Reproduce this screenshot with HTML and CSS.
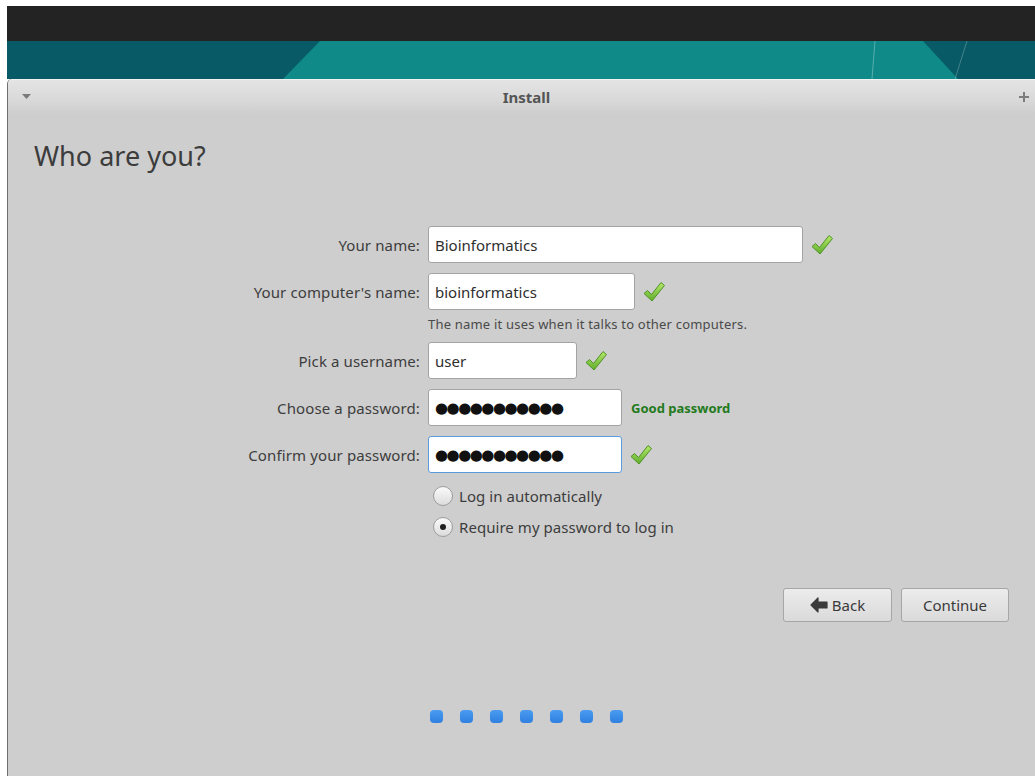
FILE: index.html
```html
<!DOCTYPE html>
<html lang="en">
<head>
<meta charset="utf-8">
<title>Install</title>
<link rel="stylesheet" href="styles.css">
</head>
<body>
<div class="screen">
  <div class="panel"></div>
  <div class="desktop">
    <svg class="wallpaper" width="1028" height="38" viewBox="0 0 1028 38" aria-hidden="true">
      <rect x="0" y="0" width="1028" height="38" fill="#0f8a89"/>
      <polygon points="0,0 313,0 276,38 0,38" fill="#075a66"/>
      <polygon points="916,0 1028,0 1028,38 951,38" fill="#075a66"/>
      <line x1="868" y1="0" x2="865" y2="38" stroke="#ffffff" stroke-opacity="0.3" stroke-width="1"/>
      <line x1="960" y1="0" x2="948" y2="38" stroke="#ffffff" stroke-opacity="0.25" stroke-width="1"/>
    </svg>

    <div class="window">
      <div class="titlebar">
        <span class="tb-menu"><svg width="9" height="6" viewBox="0 0 9 6"><polygon points="0,0 9,0 4.5,5" fill="#7a7a7a"/></svg></span>
        <span class="tb-title">Install</span>
        <span class="tb-max"><svg width="10" height="10" viewBox="0 0 10 10"><path d="M5 0v10M0 5h10" stroke="#7d7d7d" stroke-width="2"/></svg></span>
      </div>

      <div class="content">
        <h1 class="page-title">Who are you?</h1>

        <div class="form">
          <label class="label">Your name:</label>
          <div class="field">
            <div class="entry w-name">Bioinformatics</div>
            <svg class="ok" width="24" height="22" viewBox="0 0 24 22"><use href="#check"/></svg>
          </div>

          <label class="label">Your computer's name:</label>
          <div class="field">
            <div class="entry w-host">bioinformatics</div>
            <svg class="ok" width="24" height="22" viewBox="0 0 24 22"><use href="#check"/></svg>
          </div>

          <span></span>
          <div class="hint">The name it uses when it talks to other computers.</div>

          <label class="label">Pick a username:</label>
          <div class="field">
            <div class="entry w-user">user</div>
            <svg class="ok" width="24" height="22" viewBox="0 0 24 22"><use href="#check"/></svg>
          </div>

          <label class="label">Choose a password:</label>
          <div class="field">
            <div class="entry w-pass"><span class="dots">●●●●●●●●●●●</span></div>
            <span class="strength">Good password</span>
          </div>

          <label class="label">Confirm your password:</label>
          <div class="field">
            <div class="entry w-pass focused"><span class="dots">●●●●●●●●●●●</span></div>
            <svg class="ok" width="24" height="22" viewBox="0 0 24 22"><use href="#check"/></svg>
          </div>

          <span></span>
          <div class="radios">
            <div class="radio-row"><span class="radio"></span>Log in automatically</div>
            <div class="radio-row"><span class="radio checked"></span>Require my password to log in</div>
          </div>
        </div>

        <div class="actions">
          <button class="btn btn-back">
            <svg width="18" height="16" viewBox="0 0 18 16"><path d="M1 8 L8 1 L8 5 L17 5 L17 11 L8 11 L8 15 Z" fill="#3b3b3b" stroke="#3b3b3b" stroke-width="1.2" stroke-linejoin="round"/></svg>
            Back
          </button>
          <button class="btn">Continue</button>
        </div>

        <div class="progress">
          <span class="step"></span><span class="step"></span><span class="step"></span><span class="step"></span><span class="step"></span><span class="step"></span><span class="step"></span>
        </div>
      </div>
    </div>
  </div>
</div>

<svg width="0" height="0" class="defs" aria-hidden="true">
  <defs>
    <linearGradient id="checkFill" x1="0" y1="0" x2="0" y2="1">
      <stop offset="0" stop-color="#b5e86a"/>
      <stop offset="1" stop-color="#5fae2c"/>
    </linearGradient>
    <symbol id="check" viewBox="0 0 24 22">
      <path d="M2 12.5 L5.5 9.5 L9.5 13.5 L19 1.5 L22.5 4.5 L10 20 Z" fill="url(#checkFill)" stroke="#4f9226" stroke-width="1" stroke-linejoin="round"/>
    </symbol>
  </defs>
</svg>
</body>
</html>
```

FILE: styles.css
```css
html, body {
  margin: 0;
  padding: 0;
  background: #ffffff;
  overflow: hidden;
  height: 100%;
}

body {
  font-family: "Noto Sans", "Open Sans", sans-serif;
  color: #3a3a3a;
}

.defs {
  position: absolute;
}

.screen {
  margin: 6px 0 0 7px;
  height: 770px;
  display: flex;
  flex-direction: column;
}

.panel {
  height: 35px;
  background: #232323;
  flex: none;
}

.desktop {
  position: relative;
  flex: 1;
  display: flex;
  flex-direction: column;
}

.wallpaper {
  position: absolute;
  left: 0;
  top: 0;
}

.window {
  position: relative;
  margin-top: 38px;
  width: 1037px;
  flex: 1;
  background: #cecece;
  border-left: 1px solid #6f6f6f;
  border-top-left-radius: 5px;
  display: flex;
  flex-direction: column;
}

.titlebar {
  height: 34px;
  flex: none;
  display: grid;
  grid-template-columns: 1fr auto 1fr;
  align-items: center;
  background: linear-gradient(#e4e4e4, #d9d9d9 60%, #cfcfcf);
  border-top: 1px solid #f2f2f2;
  border-top-left-radius: 5px;
  box-sizing: border-box;
}

.tb-menu {
  padding-left: 14px;
  display: flex;
}

.tb-title {
  font-weight: bold;
  font-size: 15px;
  color: #555555;
}

.tb-max {
  justify-self: end;
  padding-right: 16px;
  display: flex;
}

.content {
  display: flex;
  flex-direction: column;
  flex: 1;
}

.page-title {
  margin: 27px 0 0 26px;
  font-size: 27px;
  line-height: 32px;
  font-weight: normal;
  color: #3c3c3c;
}

.form {
  margin-top: 54px;
  display: grid;
  grid-template-columns: 412px 1fr;
  column-gap: 8px;
  row-gap: 10px;
  align-items: center;
}

.label {
  justify-self: end;
  font-size: 15px;
  letter-spacing: 0.12px;
  color: #3d3d3d;
}

.field {
  display: flex;
  align-items: center;
  height: 37px;
}

.entry {
  height: 37px;
  box-sizing: border-box;
  background: #ffffff;
  border: 1px solid #a3a3a3;
  border-radius: 3px;
  padding: 0 6px;
  display: flex;
  align-items: center;
  font-size: 15px;
  color: #2e2e2e;
}

.entry.focused {
  border-color: #5a9be0;
}

.w-name { width: 375px; }
.w-host { width: 207px; }
.w-user { width: 149px; }
.w-pass { width: 194px; }

.dots {
  font-family: "DejaVu Sans", sans-serif;
  font-size: 15px;
  color: #111111;
  letter-spacing: -1.5px;
}

.ok {
  margin-left: 7px;
  flex: none;
}

.strength {
  margin-left: 9px;
  font-size: 13px;
  font-weight: bold;
  color: #237a1c;
}

.hint {
  margin-top: -3px;
  font-size: 13px;
  letter-spacing: 0.2px;
  line-height: 15px;
  color: #4a4a4a;
}

.radios {
  display: flex;
  flex-direction: column;
  gap: 6px;
}

.radio-row {
  height: 25px;
  display: flex;
  align-items: center;
  font-size: 15px;
  letter-spacing: 0.05px;
  color: #3d3d3d;
  padding-left: 5px;
}

.radio {
  width: 20px;
  height: 20px;
  box-sizing: border-box;
  border-radius: 50%;
  border: 1px solid #9c9c9c;
  background: linear-gradient(#fafafa, #dcdcdc);
  margin-right: 6px;
  display: flex;
  align-items: center;
  justify-content: center;
}

.radio.checked::after {
  content: "";
  width: 6px;
  height: 6px;
  border-radius: 50%;
  background: #1f1f1f;
}

.actions {
  margin-top: 49px;
  display: flex;
  justify-content: flex-end;
  gap: 9px;
  padding-right: 36px;
}

.btn {
  height: 34px;
  box-sizing: border-box;
  border: 1px solid #a6a6a6;
  border-radius: 3px;
  background: linear-gradient(#ececec, #dadada);
  font-family: "Noto Sans", "Open Sans", sans-serif;
  font-size: 15px;
  color: #3a3a3a;
  width: 108px;
  display: flex;
  align-items: center;
  justify-content: center;
  gap: 4px;
  padding: 0 0 1px;
}

.btn-back {
  width: 109px;
}

.progress {
  margin-top: 88px;
  display: flex;
  justify-content: center;
  gap: 17px;
}

.step {
  width: 13px;
  height: 13px;
  border-radius: 4px;
  background: linear-gradient(#4a9bf0, #2f80e0);
}
```
